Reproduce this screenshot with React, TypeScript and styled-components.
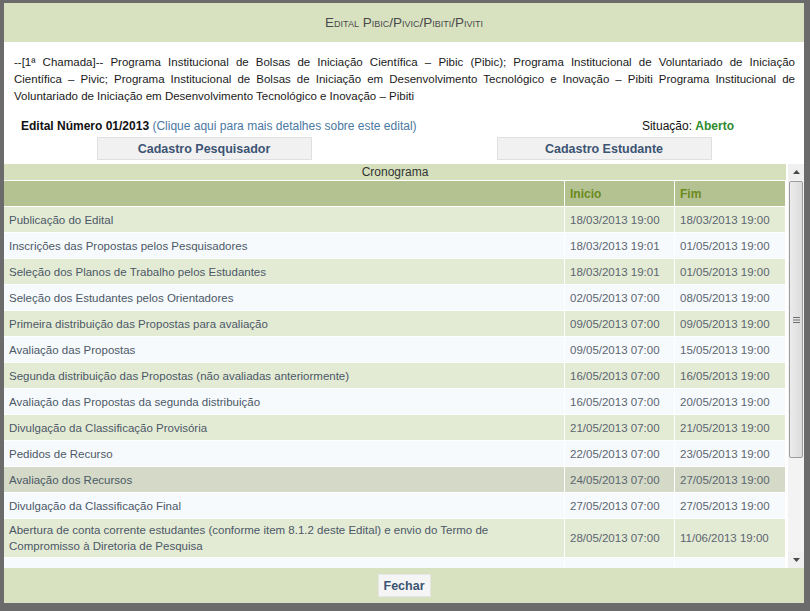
import React from "react"
import styled, { createGlobalStyle } from "styled-components"

const GlobalStyle = createGlobalStyle`
    html, body {
        margin: 0;
        padding: 0;
        background: #6b6b6b;
    }
    body {
        font-family: "Liberation Sans", Arial, sans-serif;
    }
`

type Etapa = {
    titulo: React.ReactNode
    inicio: string
    fim: string
    destaque?: boolean
}

const etapas: Etapa[] = [
    { titulo: "Publicação do Edital", inicio: "18/03/2013 19:00", fim: "18/03/2013 19:00" },
    { titulo: "Inscrições das Propostas pelos Pesquisadores", inicio: "18/03/2013 19:01", fim: "01/05/2013 19:00" },
    { titulo: "Seleção dos Planos de Trabalho pelos Estudantes", inicio: "18/03/2013 19:01", fim: "01/05/2013 19:00" },
    { titulo: "Seleção dos Estudantes pelos Orientadores", inicio: "02/05/2013 07:00", fim: "08/05/2013 19:00" },
    { titulo: "Primeira distribuição das Propostas para avaliação", inicio: "09/05/2013 07:00", fim: "09/05/2013 19:00" },
    { titulo: "Avaliação das Propostas", inicio: "09/05/2013 07:00", fim: "15/05/2013 19:00" },
    { titulo: "Segunda distribuição das Propostas (não avaliadas anteriormente)", inicio: "16/05/2013 07:00", fim: "16/05/2013 19:00" },
    { titulo: "Avaliação das Propostas da segunda distribuição", inicio: "16/05/2013 07:00", fim: "20/05/2013 19:00" },
    { titulo: "Divulgação da Classificação Provisória", inicio: "21/05/2013 07:00", fim: "21/05/2013 19:00" },
    { titulo: "Pedidos de Recurso", inicio: "22/05/2013 07:00", fim: "23/05/2013 19:00" },
    { titulo: "Avaliação dos Recursos", inicio: "24/05/2013 07:00", fim: "27/05/2013 19:00", destaque: true },
    { titulo: "Divulgação da Classificação Final", inicio: "27/05/2013 07:00", fim: "27/05/2013 19:00" },
    {
        titulo: (
            <>
                Abertura de conta corrente estudantes (conforme item 8.1.2 deste Edital) e envio do Termo de
                <br />
                Compromisso à Diretoria de Pesquisa
            </>
        ),
        inicio: "28/05/2013 07:00",
        fim: "11/06/2013 19:00",
    },
    // the next row is scrolled out of view, only its top edge shows
    { titulo: "", inicio: "", fim: "" },
]

const App: React.FC = () => (
    <>
        <GlobalStyle />
        <Frame>
            <Header>Edital Pibic/Pivic/Pibiti/Piviti</Header>
            <Intro>
                <IntroLine>
                    --[1ª Chamada]-- Programa Institucional de Bolsas de Iniciação Científica – Pibic (Pibic); Programa Institucional de Voluntariado de Iniciação
                </IntroLine>
                <IntroLine>
                    Científica – Pivic; Programa Institucional de Bolsas de Iniciação em Desenvolvimento Tecnológico e Inovação – Pibiti Programa Institucional de
                </IntroLine>
                <IntroLine $last>
                    Voluntariado de Iniciação em Desenvolvimento Tecnológico e Inovação – Pibiti
                </IntroLine>
            </Intro>
            <InfoRow>
                <span>
                    <strong>Edital Número 01/2013</strong> <DetailLink href="#">(Clique aqui para mais detalhes sobre este edital)</DetailLink>
                </span>
                <span>
                    Situação: <Status>Aberto</Status>
                </span>
            </InfoRow>
            <ButtonRow>
                <ActionButton>Cadastro Pesquisador</ActionButton>
                <ActionButton>Cadastro Estudante</ActionButton>
            </ButtonRow>
            <Pane>
                <Viewport>
                    <Caption>Cronograma</Caption>
                    <Row $kind="head">
                        <HeadCell />
                        <HeadCell>Inicio</HeadCell>
                        <HeadCell>Fim</HeadCell>
                    </Row>
                    {etapas.map((e, i) => (
                        <Row key={i} $kind={e.destaque ? "hover" : i % 2 === 0 ? "odd" : "even"}>
                            <Cell>{e.titulo}</Cell>
                            <Cell $date>{e.inicio}</Cell>
                            <Cell $date>{e.fim}</Cell>
                        </Row>
                    ))}
                </Viewport>
                <ScrollBar>
                    <ScrollArrow>
                        <svg width="7" height="4" viewBox="0 0 7 4">
                            <path d="M0 4 L3.5 0 L7 4 Z" fill="#4a4a4a" />
                        </svg>
                    </ScrollArrow>
                    <Track>
                        <Thumb>
                            <svg width="7" height="6" viewBox="0 0 7 6">
                                <path d="M0 0.5 H7 M0 3 H7 M0 5.5 H7" stroke="#6f6f6f" strokeWidth="1" />
                            </svg>
                        </Thumb>
                    </Track>
                    <ScrollArrow>
                        <svg width="7" height="4" viewBox="0 0 7 4">
                            <path d="M0 0 L3.5 4 L7 0 Z" fill="#4a4a4a" />
                        </svg>
                    </ScrollArrow>
                </ScrollBar>
            </Pane>
            <Footer>
                <CloseButton>Fechar</CloseButton>
            </Footer>
        </Frame>
    </>
)

export default App

const Frame = styled.div`
    width: 810px;
    height: 611px;
    box-sizing: border-box;
    border-style: solid;
    border-color: #6b6b6b;
    border-width: 3px 6px 8px 4px;
    background: #fff;
    display: flex;
    flex-direction: column;
    overflow: hidden;
`

const Header = styled.header`
    height: 39px;
    flex: none;
    display: flex;
    align-items: center;
    justify-content: center;
    background: #d8e2c1;
    color: #4a4a4a;
    font-size: 13.5px;
    font-variant: small-caps;
`

const Intro = styled.div`
    padding: 12px 9px 0 10px;
    font-size: 11.5px;
    line-height: 17px;
    color: #1a1a1a;
`

const IntroLine = styled.span<{ $last?: boolean }>`
    display: block;
    white-space: nowrap;
    text-align: ${(p) => (p.$last ? "left" : "justify")};
    text-align-last: ${(p) => (p.$last ? "left" : "justify")};
`

const InfoRow = styled.div`
    margin-top: 13px;
    padding: 0 70px 0 17px;
    display: flex;
    justify-content: space-between;
    font-size: 12px;
    line-height: 16px;
    color: #111;
`

const DetailLink = styled.a`
    color: #4a78a3;
    text-decoration: none;
`

const Status = styled.strong`
    color: #2e8b2e;
`

const ButtonRow = styled.div`
    margin: 3px 0 4px;
    display: grid;
    grid-template-columns: 1fr 1fr;
    justify-items: center;
`

const ActionButton = styled.button`
    width: 215px;
    height: 23px;
    padding: 0;
    background: #f1f1f1;
    border: 1px solid #e0e0e0;
    color: #3c5473;
    font-family: "Liberation Sans", Arial, sans-serif;
    font-weight: bold;
    font-size: 12.5px;
    cursor: pointer;
`

const Pane = styled.div`
    flex: 1;
    min-height: 0;
    display: flex;
`

const Viewport = styled.div`
    flex: 1;
    overflow: hidden;
    font-size: 11.5px;
`

const Caption = styled.div`
    width: 782px;
    height: 17px;
    box-sizing: border-box;
    border-bottom: 1px solid #fff;
    background: #d6e0bd;
    color: #333;
    font-size: 12px;
    line-height: 16px;
    text-align: center;
`

const rowBg = {
    head: "#b4c292",
    odd: "#e4ebd5",
    even: "#f7fafd",
    hover: "#d4dac7",
}

const Row = styled.div<{ $kind: keyof typeof rowBg }>`
    width: 782px;
    display: grid;
    grid-template-columns: 561px 110px 111px;
    background: ${(p) => rowBg[p.$kind]};
`

const Cell = styled.div<{ $date?: boolean }>`
    min-height: 26px;
    box-sizing: border-box;
    padding: 3px 5px;
    display: flex;
    align-items: center;
    border-right: 1px solid #fff;
    border-bottom: 1px solid #fff;
    line-height: 16px;
    color: ${(p) => (p.$date ? "#5b6570" : "#4b5866")};
`

const HeadCell = styled(Cell)`
    color: #6a8a1c;
    font-weight: bold;
    font-size: 12px;
`

const ScrollBar = styled.div`
    width: 16px;
    flex: none;
    display: flex;
    flex-direction: column;
    background: #f0f0f0;
    border-left: 1px solid #fff;
`

const ScrollArrow = styled.div`
    height: 16px;
    flex: none;
    display: flex;
    align-items: center;
    justify-content: center;
`

const Track = styled.div`
    flex: 1;
    padding: 1px 1px 0;
    background: #f3f3f3;
`

const Thumb = styled.div`
    height: 277px;
    box-sizing: border-box;
    border: 1px solid #9c9c9c;
    border-radius: 2px;
    background: linear-gradient(to right, #ececec, #dcdcdc);
    display: flex;
    align-items: center;
    justify-content: center;
`

const Footer = styled.footer`
    height: 35px;
    flex: none;
    display: flex;
    align-items: center;
    justify-content: center;
    background: #d8e2c1;
`

const CloseButton = styled.button`
    width: 53px;
    height: 23px;
    padding: 0;
    background: #f5f5f5;
    border: 1px solid #e6e6e6;
    color: #3c5473;
    font-family: "Liberation Sans", Arial, sans-serif;
    font-weight: bold;
    font-size: 12.5px;
    cursor: pointer;
`
